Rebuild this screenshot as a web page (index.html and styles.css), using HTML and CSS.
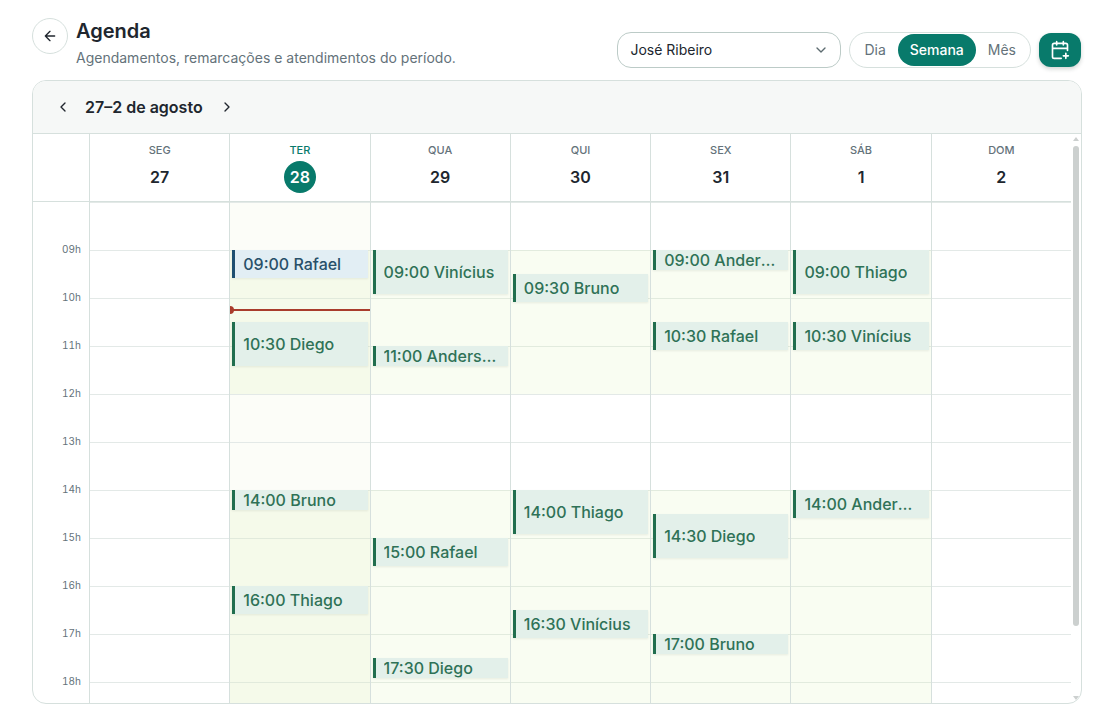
FILE: index.html
```
<!DOCTYPE html>
<html lang="pt-BR">
	<head>
		<meta charset="utf-8">
		<meta name="viewport" content="width=device-width, initial-scale=1">
		<title>Agenda</title>
		<link rel="stylesheet" href="styles.css">
	</head>
	<body>
		<div id="page">
			<header class="page-header">
				<button type="button" class="back" aria-label="Voltar">
					<svg class="icon" width="16" height="16" viewBox="0 0 24 24"><path d="m12 19-7-7 7-7M19 12H5"/></svg>
				</button>
				<div class="heading">
					<h1>Agenda</h1>
					<p>Agendamentos, remarcações e atendimentos do período.</p>
				</div>
				<div class="controls">
					<div class="select-wrapper">
						<select aria-label="Profissional">
							<option>José Ribeiro</option>
						</select>
						<svg class="icon chevron" width="16" height="16" viewBox="0 0 24 24"><path d="m6 9 6 6 6-6"/></svg>
					</div>
					<div class="views">
						<button type="button">Dia</button>
						<button type="button" class="active">Semana</button>
						<button type="button">Mês</button>
					</div>
					<button type="button" class="new" aria-label="Novo agendamento">
						<svg class="icon" width="20" height="20" viewBox="0 0 24 24"><path d="M16 19h6M16 2v4M19 16v6M21 12.6V6a2 2 0 0 0-2-2H5a2 2 0 0 0-2 2v14a2 2 0 0 0 2 2h8.500M3 10h18M8 2v4"/></svg>
					</button>
				</div>
			</header>

			<main class="card">
				<div class="toolbar">
					<button type="button" aria-label="Semana anterior">
						<svg class="icon" width="16" height="16" viewBox="0 0 24 24"><path d="m15 18-6-6 6-6"/></svg>
					</button>
					<h2>27–2 de agosto</h2>
					<button type="button" aria-label="Próxima semana">
						<svg class="icon" width="16" height="16" viewBox="0 0 24 24"><path d="m9 18 6-6-6-6"/></svg>
					</button>
				</div>

				<div class="calendar">
					<div class="week">
						<div class="week-head">
							<div class="corner"></div>
							<div class="day-head"><span>SEG</span><b>27</b></div>
							<div class="day-head today"><span>TER</span><b>28</b></div>
							<div class="day-head"><span>QUA</span><b>29</b></div>
							<div class="day-head"><span>QUI</span><b>30</b></div>
							<div class="day-head"><span>SEX</span><b>31</b></div>
							<div class="day-head"><span>SÁB</span><b>1</b></div>
							<div class="day-head"><span>DOM</span><b>2</b></div>
						</div>

						<!-- 1 linha da grade = 5 min, linha 1 = 08:00 -->
						<div class="week-body">
							<div class="hours">
								<span>09h</span>
								<span>10h</span>
								<span>11h</span>
								<span>12h</span>
								<span>13h</span>
								<span>14h</span>
								<span>15h</span>
								<span>16h</span>
								<span>17h</span>
								<span>18h</span>
							</div>

							<div class="day"></div>

							<div class="day today">
								<div class="shift morning"></div>
								<div class="shift afternoon"></div>
								<button type="button" class="event blue" style="grid-row: 13 / span 7"><span>09:00 Rafael</span></button>
								<div class="now" style="grid-row: 28"></div>
								<button type="button" class="event" style="grid-row: 31 / span 11"><span>10:30 Diego</span></button>
								<button type="button" class="event" style="grid-row: 73 / span 5"><span>14:00 Bruno</span></button>
								<button type="button" class="event" style="grid-row: 97 / span 7"><span>16:00 Thiago</span></button>
							</div>

							<div class="day">
								<div class="shift morning"></div>
								<div class="shift afternoon"></div>
								<button type="button" class="event" style="grid-row: 13 / span 11"><span>09:00 Vinícius</span></button>
								<button type="button" class="event" style="grid-row: 37 / span 5"><span>11:00 Anderson</span></button>
								<button type="button" class="event" style="grid-row: 85 / span 7"><span>15:00 Rafael</span></button>
								<button type="button" class="event" style="grid-row: 115 / span 5"><span>17:30 Diego</span></button>
							</div>

							<div class="day">
								<div class="shift morning"></div>
								<div class="shift afternoon"></div>
								<button type="button" class="event" style="grid-row: 19 / span 7"><span>09:30 Bruno</span></button>
								<button type="button" class="event" style="grid-row: 73 / span 11"><span>14:00 Thiago</span></button>
								<button type="button" class="event" style="grid-row: 103 / span 7"><span>16:30 Vinícius</span></button>
							</div>

							<div class="day">
								<div class="shift morning"></div>
								<div class="shift afternoon"></div>
								<button type="button" class="event" style="grid-row: 13 / span 5"><span>09:00 Anderson</span></button>
								<button type="button" class="event" style="grid-row: 31 / span 7"><span>10:30 Rafael</span></button>
								<button type="button" class="event" style="grid-row: 79 / span 11"><span>14:30 Diego</span></button>
								<button type="button" class="event" style="grid-row: 109 / span 5"><span>17:00 Bruno</span></button>
							</div>

							<div class="day">
								<div class="shift morning"></div>
								<div class="shift afternoon"></div>
								<button type="button" class="event" style="grid-row: 13 / span 11"><span>09:00 Thiago</span></button>
								<button type="button" class="event" style="grid-row: 31 / span 7"><span>10:30 Vinícius</span></button>
								<button type="button" class="event" style="grid-row: 73 / span 7"><span>14:00 Anderson</span></button>
							</div>

							<div class="day"></div>
						</div>
					</div>

					<div class="scrollbar" aria-hidden="true">
						<i class="up"></i>
						<div class="track"><div class="thumb"></div></div>
						<i class="down"></i>
					</div>
				</div>
			</main>
		</div>
	</body>
</html>
```
FILE: styles.css
```
* {
	box-sizing: border-box;
}

body {
	margin: 0;
	font-family: Inter, "Liberation Sans", sans-serif;
	font-size: 14px;
	line-height: 20px;
	color: #20262e;
	background-color: #fff;
}

button,
select {
	font: inherit;
	color: inherit;
	margin: 0;
	padding: 0;
	border: none;
	background: none;
	cursor: pointer;
}

h1,
h2,
p {
	margin: 0;
}

.icon {
	display: block;
	fill: none;
	stroke: currentColor;
	stroke-width: 2;
	stroke-linecap: round;
	stroke-linejoin: round;
}

#page {
	height: 100vh;
	padding: 16px 32px;
	display: flex;
	flex-direction: column;
	gap: 12px;
}

/* ---------- header ---------- */

.page-header {
	display: flex;
	gap: 8px;
}

.back {
	width: 36px;
	height: 36px;
	margin-top: 2px;
	display: grid;
	place-items: center;
	border: 1px solid #d6e0dd;
	border-radius: 50%;
}

.heading {
	flex: 1;
}

.heading h1 {
	font-size: 20px;
	line-height: 30px;
	font-weight: 600;
}

.heading p {
	padding-top: 2px;
	color: #64727a;
}

.controls {
	padding-right: 1px;
	display: flex;
	align-items: center;
	align-self: flex-end;
	gap: 8px;
}

.select-wrapper {
	position: relative;
	width: 224px;
}

select {
	appearance: none;
	width: 100%;
	height: 36px;
	padding: 0 32px 0 12px;
	border: 1px solid #bccbc7;
	border-radius: 14px;
	background-color: #fff;
}

.chevron {
	position: absolute;
	right: 12px;
	top: 10px;
	color: #5d6b70;
	pointer-events: none;
}

.views {
	height: 36px;
	padding: 0 2px;
	display: flex;
	align-items: center;
	border: 1px solid #d6e0dd;
	border-radius: 18px;
}

.views button {
	height: 32px;
	padding: 0 12px;
	border-radius: 16px;
	color: #64727a;
}

.views .active {
	font-weight: 500;
	color: #fff;
	background-color: #087a6b;
}

.new {
	width: 42px;
	height: 34px;
	display: grid;
	place-items: center;
	border-radius: 12px;
	color: #fff;
	background-color: #087a6b;
	box-shadow: 0 2px 4px rgba(20, 40, 30, 0.2);
}

/* ---------- card ---------- */

.card {
	flex: 1;
	min-height: 0;
	display: flex;
	flex-direction: column;
	overflow: hidden;
	border: 1px solid #d6e0dd;
	border-radius: 14px;
}

.toolbar {
	flex: none;
	height: 53px;
	padding: 0 16px;
	display: flex;
	align-items: center;
	gap: 8px;
	background-color: #f6f8f7;
	border-bottom: 1px solid #d6e0dd;
}

.toolbar button {
	width: 28px;
	height: 28px;
	display: grid;
	place-items: center;
}

.toolbar h2 {
	min-width: 120px;
	font-size: 16px;
	line-height: 24px;
	font-weight: 600;
}

.calendar {
	flex: 1;
	min-height: 0;
	display: flex;
}

.week {
	flex: 1;
	min-width: 0;
	display: flex;
	flex-direction: column;
	overflow: hidden;
}

.week-head,
.week-body {
	flex: none;
	display: grid;
	grid-template-columns: 56px repeat(7, minmax(0, 1fr));
}

.week-head {
	height: 68px;
	border-bottom: 1px solid #d6e0dd;
}

.day-head {
	padding-top: 8px;
	display: flex;
	flex-direction: column;
	align-items: center;
	gap: 3px;
	border-left: 1px solid #d6e0dd;
}

.day-head span {
	font-size: 11px;
	line-height: 16px;
	font-weight: 500;
	color: #64727a;
}

.day-head b {
	width: 32px;
	font-size: 16px;
	line-height: 32px;
	font-weight: 600;
	text-align: center;
}

.day-head.today span {
	color: #087a6b;
}

.day-head.today b {
	border-radius: 50%;
	color: #fff;
	background-color: #087a6b;
}

.hours {
	padding: 23px 8px 0 0;
	text-align: right;
	font-variant-numeric: tabular-nums;
}

.hours span {
	display: block;
	font-size: 10px;
	line-height: 48px;
	color: #64727a;
}

.day {
	position: relative;
	display: grid;
	grid-template-rows: repeat(132, 4px);
	grid-template-columns: minmax(0, 1fr);
	overflow: hidden;
	border-left: 1px solid #d6e0dd;
	background-image: linear-gradient(#e3e9e7 1px, transparent 1px);
	background-size: 100% 48px;
}

.day.today {
	background-color: #fcfdf8;
}

.shift {
	grid-column: 1;
	background-color: rgba(225, 245, 190, 0.2);
}

.today .shift {
	background-color: rgba(222, 238, 180, 0.2);
}

.morning {
	grid-row: 13 / span 36;
}

.afternoon {
	grid-row: 73 / span 60;
}

.event {
	grid-column: 1;
	margin: 0 2px;
	padding: 0 8px;
	display: flex;
	align-items: center;
	font-size: 16px;
	font-weight: 500;
	text-align: left;
	color: #2f7257;
	background-color: #e3f0ea;
	border-left: 3px solid #216e4e;
	box-shadow: 0 1px 2px rgba(20, 40, 30, 0.08);
}

.event span {
	overflow: hidden;
	white-space: nowrap;
	text-overflow: ellipsis;
}

.event.blue {
	color: #285069;
	background-color: #e2eef4;
	border-left-color: #1f4f70;
}

/* hora atual */
.now {
	grid-column: 1;
	height: 2px;
	margin-top: -1px;
	background-color: #a93c2b;
}

.now::before {
	content: "";
	position: absolute;
	left: -4px;
	width: 8px;
	height: 8px;
	margin-top: -3px;
	border-radius: 50%;
	background-color: #a93c2b;
}

/* ---------- scrollbar ---------- */

.scrollbar {
	width: 10px;
	padding: 3px 2px;
	display: flex;
	flex-direction: column;
	align-items: center;
}

.scrollbar i {
	border: 3px solid transparent;
}

.scrollbar .up {
	border-top: none;
	border-bottom: 4px solid #ccd0cf;
}

.scrollbar .down {
	border-bottom: none;
	border-top: 4px solid #ccd0cf;
}

.track {
	flex: 1;
	width: 6px;
	padding: 5px 0;
}

.thumb {
	height: 88%;
	border-radius: 3px;
	background-color: #ccd0cf;
}
```
